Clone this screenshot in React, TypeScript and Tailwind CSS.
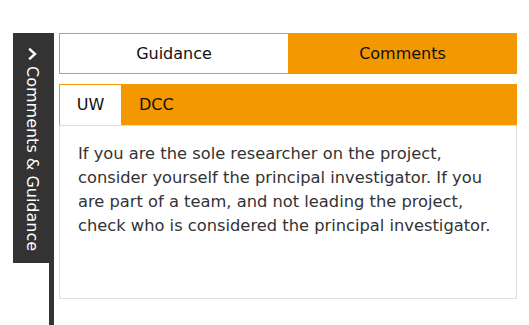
import React from "react";

export default function App() {
  const font = { fontFamily: '"DejaVu Sans", Verdana, sans-serif' };
  return (
    <div className="h-[325px] w-[529px] bg-white flex pl-[13px] pt-[33px] overflow-hidden" style={font}>
      <div className="flex flex-col items-end w-[41px] shrink-0">
        <div className="w-[41px] h-[230px] bg-[#333333] flex flex-col items-center pt-[15px] text-white">
          <svg width="10" height="12" viewBox="0 0 10 12" className="ml-[-1px]">
            <path d="M2 1.5 L7 6 L2 10.5" fill="none" stroke="white" strokeWidth="2.4" strokeLinecap="square" />
          </svg>
          <div className="mt-[6px] text-[16px] leading-[20px] text-white [writing-mode:vertical-rl] whitespace-nowrap ml-[-3px]">
            Comments &amp; Guidance
          </div>
        </div>
        <div className="w-[5px] flex-1 bg-[#333333]" />
      </div>
      <div className="ml-[5px] w-[458px] flex flex-col">
        <div className="flex h-[41px] text-[16px] text-[#111] bg-[#f39800]">
          <div className="w-[228px] ml-px my-px bg-white flex items-center justify-center">Guidance</div>
          <div className="flex-1 flex items-center justify-center">Comments</div>
        </div>
        <div className="mt-[10px] flex h-[41px] text-[16px] text-[#111] bg-[#f39800]">
          <div className="bg-white mt-px ml-px w-[61px] flex items-center justify-center">UW</div>
          <div className="px-[18px] flex items-center">DCC</div>
        </div>
        <div className="h-[174px] border border-[#dddddd] pl-[18px] pr-[16px] pt-[16px] text-[16.3px] leading-[24px] text-[#333]">
          If you are the sole researcher on the project, consider yourself the principal investigator. If you are part of a team, and not leading the project, check who is considered the principal investigator.
        </div>
      </div>
    </div>
  );
}
